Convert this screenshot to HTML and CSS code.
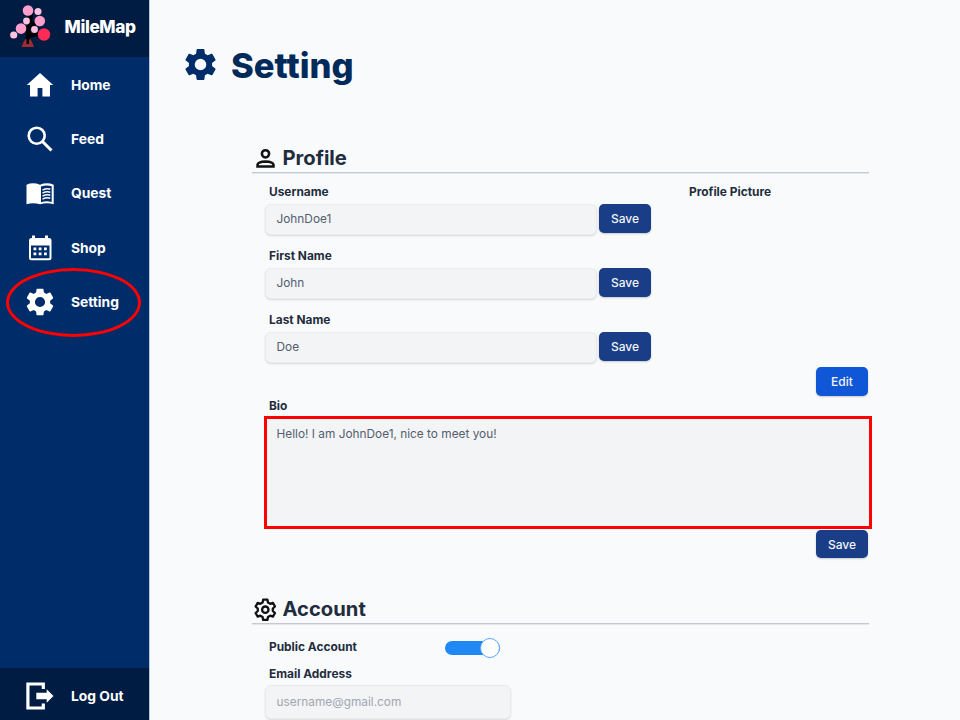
FILE: index.html
```html
<!DOCTYPE html>
<html lang="en">
<head>
<meta charset="utf-8">
<title>MileMap</title>
<link rel="stylesheet" href="styles.css">
</head>
<body>
<svg class="defs" aria-hidden="true">
  <symbol id="gear" viewBox="2.4 2.4 19.2 19.2"><path d="M19.14 12.94c.04-.3.06-.61.06-.94s-.02-.64-.07-.94l2.03-1.58c.18-.14.23-.41.12-.61l-1.92-3.32c-.12-.22-.37-.29-.59-.22l-2.39.96c-.5-.38-1.03-.7-1.62-.94l-.36-2.54c-.04-.24-.24-.41-.48-.41h-3.84c-.24 0-.43.17-.47.41l-.36 2.54c-.59.24-1.13.57-1.62.94l-2.39-.96c-.22-.08-.47 0-.59.22L2.74 8.87c-.12.21-.08.47.12.61l2.03 1.58c-.05.3-.09.63-.09.94s.02.64.07.94l-2.03 1.58c-.18.14-.23.41-.12.61l1.92 3.32c.12.22.37.29.59.22l2.39-.96c.5.38 1.03.7 1.62.94l.36 2.54c.05.24.24.41.48.41h3.84c.24 0 .44-.17.47-.41l.36-2.54c.59-.24 1.13-.56 1.62-.94l2.39.96c.22.08.47 0 .59-.22l1.92-3.32c.12-.22.07-.47-.12-.61zM12 15.6a3.6 3.6 0 1 1 0-7.2 3.6 3.6 0 0 1 0 7.2z"/></symbol>
</svg>
<div class="app">
  <aside class="sidebar">
    <div class="brand">
      <svg class="logo" width="42" height="46" viewBox="0 0 42 46">
        <path d="M18 38Q17 29 19 24Q22 18 20 8M19 34Q28 32 36 31M19 31Q17 28 12 25M22 23L30 17M18 17L21 23" fill="none" stroke="#000" stroke-width="4" stroke-linecap="round"/>
        <path d="M11.500 45L13.500 40L16 36.500L18 41L20 36.500L22.500 41L24 45Z" fill="#9c2c34"/>
        <path d="M18 33L17.700 42" fill="none" stroke="#000" stroke-width="2.400"/>
        <circle cx="18" cy="8.500" r="5.3" fill="#ff9fcb"/>
        <circle cx="28" cy="9.500" r="3.5" fill="#ffc2df"/>
        <circle cx="29.800" cy="19" r="5.3" fill="#ff9fcb"/>
        <circle cx="16.500" cy="19" r="3.4" fill="#ffc2df"/>
        <circle cx="11" cy="26.600" r="5.300" fill="#ff9fcb"/>
        <circle cx="24.500" cy="27.500" r="3.400" fill="#ffc2df"/>
        <circle cx="3.700" cy="33" r="3.600" fill="#ffc2df"/>
        <circle cx="34" cy="32.500" r="6.200" fill="#ff2b57"/>
      </svg>
      <span>MileMap</span>
    </div>
    <nav class="nav">
      <a class="item"><svg class="icon" viewBox="0 0 28 28"><path d="M14 2L0.800 14H4v11.600h7.600V17h4.800v8.600H24V14h3.200z"/></svg>Home</a>
      <a class="item"><svg class="icon" viewBox="0 0 28 28"><circle cx="10.700" cy="10.700" r="8" fill="none" stroke="#fff" stroke-width="2.600"/><path d="M16.500 16.500L25.500 25.500" fill="none" stroke="#fff" stroke-width="3.100"/></svg>Feed</a>
      <a class="item"><svg class="icon" viewBox="0 0 28 28"><path d="M.500 5.700Q7 3 14 5.700Q21 3 27.700 5.700V25.300Q21 23 14 25.300Q7 23 .5 25.300Z"/><path d="M15 7.400Q20.500 5.500 25.700 7.300V23Q20.500 21.300 15 23.200Z" fill="#002d6a"/><path d="M16.500 11.100Q20.500 9.200 24.300 10.200M16.500 14.100Q20.500 12.200 24.300 13.200M16.500 17.100Q20.500 15.200 24.300 16.200M16.500 20.100Q20.500 18.200 24.300 19.200" fill="none" stroke="#fff" stroke-width="1.500"/></svg>Quest</a>
      <a class="item"><svg class="icon" viewBox="0 0 28 28"><path fill-rule="evenodd" d="M6 1.500h3V4h10V1.500h3V4h1a2.500 2.500 0 0 1 2.500 2.500v17.300a2.500 2.500 0 0 1-2.500 2.500H5.500A2.500 2.500 0 0 1 3 23.800V6.500A2.500 2.500 0 0 1 5.500 4H6zM5 11.500v12.800h18.500V11.500z"/><path d="M7.500 13.500h2.800v2.800H7.500zM12.700 13.500h2.800v2.800h-2.800zM18 13.500h2.800v2.800H18zM7.500 18.500h2.800v2.800H7.500zM12.700 18.500h2.800v2.800h-2.800zM18 18.500h2.800v2.800H18z"/></svg>Shop</a>
      <a class="item current"><svg class="icon" viewBox="0 0 28 28"><use href="#gear" x=".4" y=".4" width="27.200" height="27.200"/></svg>Setting<span class="ring"></span></a>
    </nav>
    <a class="item logout"><svg class="icon" viewBox="0 0 28 28"><path d="M17.300 7V2H1.900v24h15.400v-4.500" fill="none" stroke="#fff" stroke-width="3.200"/><path d="M10.300 10.700h10.400V7.200L27.500 14l-6.800 6.800v-3.500H10.300z"/></svg>Log Out</a>
  </aside>
  <main class="main">
    <h1 class="title"><svg class="title-icon"><use href="#gear"/></svg>Setting</h1>

    <section class="section profile">
      <h2 class="section-title"><svg width="26" height="26" viewBox="0 0 26 26" fill="none" stroke="#111" stroke-width="2.500"><circle cx="13.500" cy="8.800" r="3.600"/><path d="M5.500 21.500V19.800Q6 16.500 13.500 16.400Q21 16.500 21.500 19.800V21.500Z"/></svg>Profile</h2>
      <div class="columns">
        <div class="fields">
          <div class="field"><label>Username</label><div class="row"><div class="input">JohnDoe1</div><button class="button">Save</button></div></div>
          <div class="field"><label>First Name</label><div class="row"><div class="input">John</div><button class="button">Save</button></div></div>
          <div class="field"><label>Last Name</label><div class="row"><div class="input">Doe</div><button class="button">Save</button></div></div>
        </div>
        <div class="picture"><label>Profile Picture</label><button class="button edit">Edit</button></div>
      </div>
      <div class="bio">
        <label>Bio</label>
        <div class="textarea">Hello! I am JohnDoe1, nice to meet you!</div>
        <button class="button bio-save">Save</button>
      </div>
    </section>

    <section class="section account">
      <h2 class="section-title"><svg width="26" height="26" viewBox="0 0 26 26" fill="none" stroke="#111" stroke-width="2.300" stroke-linejoin="round"><path d="M11.200 3.600h4.200l.6 3 2.200 1.200 2.700-.9 2.100 3.600-2.200 2v2.500l2.200 2-2.100 3.600-2.700-.9-2.200 1.200-.6 3h-4.200l-.6-3-2.200-1.200-2.700.9L3.600 17l2.200-2v-2.500l-2.200-2 2.100-3.600 2.700.9 2.200-1.200z"/><circle cx="13.300" cy="13.700" r="3.200"/></svg>Account</h2>
      <div class="toggle-row"><label>Public Account</label><span class="toggle"><span class="knob"></span></span></div>
      <div class="email"><label>Email Address</label><div class="input placeholder">username@gmail.com</div></div>
    </section>
  </main>
</div>
</body>
</html>
```
FILE: styles.css
```css
* { box-sizing: border-box; }
body { margin: 0; font-family: Inter, sans-serif; color: #1f2d3d; background: #f9fafc; }
.defs { position: absolute; width: 0; height: 0; }
.app { display: flex; height: 720px; overflow: hidden; }

.sidebar { display: flex; flex-direction: column; width: 150px; flex: none; background: #002d6a; border-right: 1px solid #b9c6dc; color: #fff; font-weight: 700; }
.brand { display: flex; align-items: center; height: 57px; padding-left: 10px; gap: 12.500px; background: #001c42; font-size: 17.300px; font-weight: 800; letter-spacing: -.4px; }
.brand span { margin-top: -4px; }
.logo { flex: none; margin-top: -7px; }
.nav { display: flex; flex-direction: column; flex: 1; }
.item { position: relative; display: flex; align-items: center; gap: 17px; height: 54.300px; padding-top: 1px; padding-left: 26px; font-size: 13.800px; }
.icon { width: 28px; height: 28px; flex: none; fill: #fff; }
.ring { position: absolute; left: 6px; top: -6px; width: 135px; height: 69px; border: 3px solid #f00; border-radius: 50%; }
.logout { height: 52px; padding-top: 3px; background: #001c42; }

.main { flex: 1; min-width: 0; padding: 41px 91px 0 35px; }
.title { display: flex; align-items: center; gap: 15px; height: 48px; margin: 0; font-size: 34.600px; font-weight: 800; color: #002a5a; }
.title-icon { width: 31px; height: 31px; margin-top: -1px; fill: #002d6a; }
.section { margin-left: 67px; }
.profile { padding-top: 54px; }
.section-title { display: flex; align-items: center; gap: 4.500px; height: 30px; margin: 0; font-size: 20.200px; font-weight: 700; border-bottom: 1px solid #c5c9d0; box-shadow: 0 1px 0 #e3e6ea; }
.section-title svg { flex: none; }
label { display: block; height: 16px; line-height: 16px; padding-left: 4px; font-size: 11.900px; font-weight: 700; }
.columns { display: flex; justify-content: space-between; height: 224px; padding: 11px 0 0 13px; }
.fields { display: flex; flex-direction: column; gap: 13px; width: 386px; }
.row { display: flex; align-items: flex-start; gap: 2px; margin-top: 4px; }
.input { width: 332px; height: 31px; padding: 0 10.500px; line-height: 29px; font-size: 11.850px; color: #535e6e; background: #f3f4f6; border: 1px solid #e9ebee; border-radius: 6px; box-shadow: 0 1px 2px #0002; }
.button { width: 52px; height: 29px; padding: 0; border: 0; border-radius: 5px; background: #193e87; color: #f3f4f6; font: 500 12px Inter, sans-serif; box-shadow: 0 1px 2px #0003; }
.picture { display: flex; flex-direction: column; justify-content: space-between; width: 184px; padding-bottom: 1px; }
.edit { align-self: flex-end; background: #1057d8; margin-right: 1px; }
.bio { display: flex; flex-direction: column; padding-left: 13px; }
.bio label { position: relative; top: 1px; }
.textarea { width: 608px; height: 113px; margin: 3px 0 0 -1px; padding: 7px 9.500px; font-size: 11.850px; line-height: 16px; color: #535e6e; background: #f3f4f6; border: 3px solid #f00; }
.bio-save { align-self: flex-end; margin: 1px 1px 0 0; height: 28px; }
.account { padding-top: 36px; }
.toggle-row { display: flex; align-items: center; height: 20px; margin: 13px 0 0 13px; }
.toggle-row label { width: 180px; margin-top: -1px; }
.toggle { display: flex; justify-content: flex-end; align-items: center; width: 54.500px; height: 14px; margin-top: 2px; border-radius: 7px; background: #1f88f5; }
.knob { width: 20px; height: 20px; flex: none; border: 1px solid #5aa7f7; border-radius: 50%; background: #fff; }
.email { margin: 9px 0 0 13px; }
.placeholder { width: 246px; height: 34px; line-height: 32px; margin-top: 3px; color: #a0a7b2; }
```
